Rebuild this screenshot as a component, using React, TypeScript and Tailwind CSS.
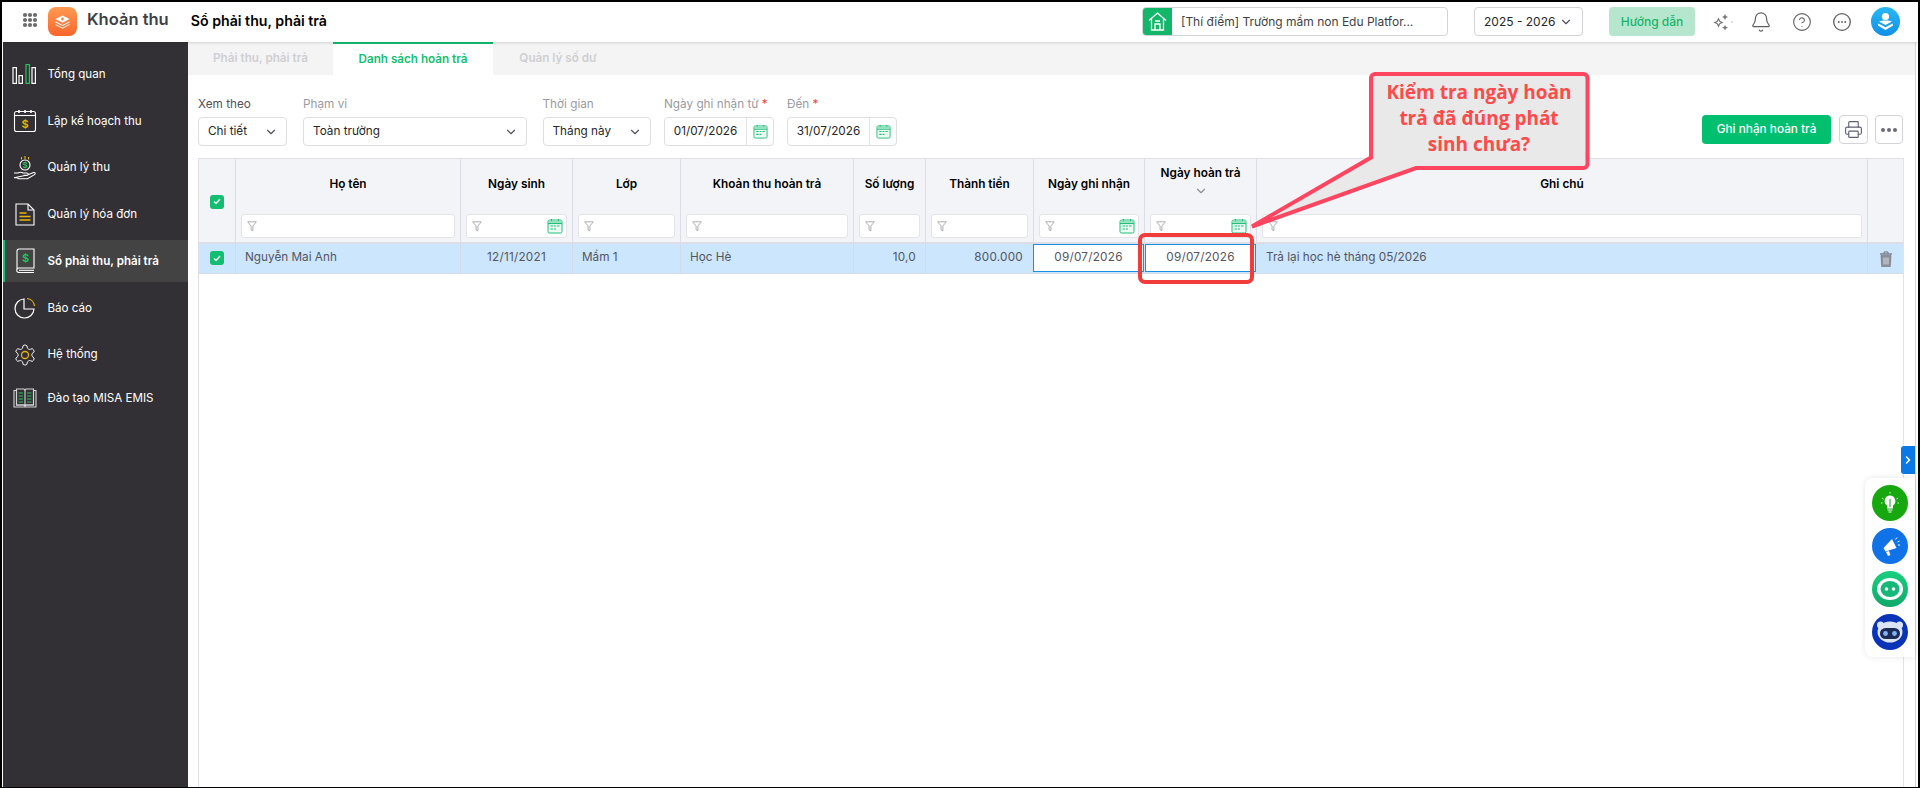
import React from "react";
import { Bell, ChevronDown, ChevronRight, CircleHelp, Printer } from "lucide-react";

const Y = "#eab308";
const G = "#22c55e";

function Grid3() {
  const c = [23, 28, 33];
  return (
    <svg width="60" height="40" viewBox="0 0 60 40" className="absolute left-0 top-0">
      {c.map((x) => [13, 18, 23].map((y) => <circle key={`${x}-${y}`} cx={x} cy={y} r="2.1" fill="#6b6b6b" />))}
    </svg>
  );
}

function Logo() {
  return (
    <svg width="29" height="29" viewBox="0 0 29 29" className="shrink-0">
      <defs>
        <linearGradient id="lg" x1="0" y1="0" x2="0" y2="1">
          <stop offset="0" stopColor="#ff9a52" />
          <stop offset="1" stopColor="#f9652b" />
        </linearGradient>
      </defs>
      <rect width="29" height="29" rx="8" fill="url(#lg)" />
      <path d="M14.5 8.5l7 3.6-7 3.6-7-3.6z" fill="#fff" />
      <path d="M8 14.6l6.5 3.3 6.5-3.3 1 .6-7.5 3.9-7.5-3.9z" fill="#fff" />
      <path d="M8 17.2l6.5 3.3 6.5-3.3 1 .6-7.5 3.9-7.5-3.9z" fill="#fff" opacity=".9" />
      <circle cx="14.5" cy="12" r="1.4" fill="#f9803f" />
    </svg>
  );
}

function IconOverview() {
  return (
    <svg width="25" height="22" viewBox="0 0 25 22" fill="none" strokeWidth="1.2">
      <rect x="1" y="4.6" width="3.4" height="15.8" stroke="#fff" />
      <rect x="7" y="12.6" width="3.4" height="7.8" stroke="#fff" />
      <rect x="14" y="1.6" width="3.4" height="18.8" stroke={G} />
      <rect x="20" y="4.6" width="3.4" height="15.8" stroke="#fff" />
    </svg>
  );
}
function IconPlan() {
  return (
    <svg width="24" height="24" viewBox="0 0 24 24" fill="none" stroke="#fff" strokeWidth="1.1">
      <rect x="1.5" y="2.5" width="21" height="20" rx="2" />
      <path d="M1.5 6.5h21" />
      <path d="M6 1v3M12 1v3M18 1v3" strokeWidth="1.6" />
      <text x="12" y="18.5" textAnchor="middle" fontSize="11" fontFamily="Inter" fontWeight="600" fill={Y} stroke="none">$</text>
    </svg>
  );
}
function IconCollect() {
  return (
    <svg width="24" height="26" viewBox="0 0 24 26" fill="none" stroke="#fff" strokeWidth="1.1">
      <path d="M12 1v3M8.5 2v2.4M15.5 2v2.4" stroke={Y} />
      <circle cx="12" cy="10" r="5" />
      <text x="12" y="13" textAnchor="middle" fontSize="8" fontFamily="Inter" fontWeight="600" fill={G} stroke="none">$</text>
      <path d="M1 18h4c2-1 3.5-1 5 0h4c1.6 0 1.6 2.4 0 2.4h-3.5M14.5 20l6-2.4c1.6-.5 2.4 1 1 2l-7 4.2H5.500l-1.500-1H1z" />
    </svg>
  );
}
function IconInvoice() {
  return (
    <svg width="22" height="24" viewBox="0 0 22 24" fill="none" stroke="#fff" strokeWidth="1.1">
      <path d="M2 2h12l6 6v15H2z" />
      <path d="M14 2v6h6" />
      <path d="M5.500 11h7M5.500 14.500h11M5.500 18h11" stroke={Y} strokeWidth="1.300" />
    </svg>
  );
}
function IconLedger() {
  return (
    <svg width="22" height="26" viewBox="0 0 22 26" fill="none" stroke="#fff" strokeWidth="1.1">
      <path d="M3 21V3a2 2 0 0 1 2-2h15v19H5a2 2 0 0 0 0 4.500h15" />
      <path d="M5 22.300h15" />
      <text x="11.500" y="14" textAnchor="middle" fontSize="11" fontFamily="Inter" fontWeight="600" fill={G} stroke="none">$</text>
    </svg>
  );
}
function IconPie() {
  return (
    <svg width="22" height="22" viewBox="0 0 22 22" fill="none" stroke="#fff" strokeWidth="1.2">
      <path d="M10 2a9.500 9.500 0 1 0 10 10H10z" />
      <path d="M13 1.500a8.500 8.500 0 0 1 7.500 7.500" stroke={Y} />
    </svg>
  );
}
function IconGear() {
  return (
    <svg width="24" height="24" viewBox="0 0 24 24" fill="none" stroke="#fff" strokeWidth="1">
      <path d="M12.220 2h-.44a2 2 0 0 0-2 2v.18a2 2 0 0 1-1 1.730l-.43.25a2 2 0 0 1-2 0l-.15-.08a2 2 0 0 0-2.730.73l-.22.38a2 2 0 0 0 .73 2.730l.15.1a2 2 0 0 1 1 1.720v.51a2 2 0 0 1-1 1.740l-.15.09a2 2 0 0 0-.73 2.730l.22.38a2 2 0 0 0 2.730.73l.15-.08a2 2 0 0 1 2 0l.43.25a2 2 0 0 1 1 1.730V20a2 2 0 0 0 2 2h.44a2 2 0 0 0 2-2v-.18a2 2 0 0 1 1-1.730l.43-.25a2 2 0 0 1 2 0l.15.08a2 2 0 0 0 2.730-.73l.22-.39a2 2 0 0 0-.73-2.730l-.15-.08a2 2 0 0 1-1-1.740v-.5a2 2 0 0 1 1-1.740l.15-.09a2 2 0 0 0 .73-2.730l-.22-.38a2 2 0 0 0-2.730-.73l-.15.08a2 2 0 0 1-2 0l-.43-.25a2 2 0 0 1-1-1.730V4a2 2 0 0 0-2-2z" />
      <circle cx="12" cy="12" r="3.500" stroke={Y} strokeWidth="1.300" />
    </svg>
  );
}
function IconBook() {
  return (
    <svg width="24" height="22" viewBox="0 0 24 22" fill="none" stroke="#d4d4d4" strokeWidth="1.1">
      <path d="M1 3.500h2.500v14.500H12v2H1zM23 3.500h-2.500v14.500H12v2h11z" />
      <path d="M3.500 2H11l1 1.500L13 2h7.500v16H13l-1 1-1-1H3.500zM12 3.500V19" />
      <path d="M5.500 6h4.500M5.500 9h4.500M5.500 12h4.500M5.500 15h4.500M14 6h4.500M14 9h4.500M14 12h4.500M14 15h4.500" stroke={G} />
    </svg>
  );
}

const MENU: [string, React.ReactNode, boolean?][] = [
  ["Tổng quan", <IconOverview />],
  ["Lập kế hoạch thu", <IconPlan />],
  ["Quản lý thu", <IconCollect />],
  ["Quản lý hóa đơn", <IconInvoice />],
  ["Sổ phải thu, phải trả", <IconLedger />, true],
  ["Báo cáo", <IconPie />],
  ["Hệ thống", <IconGear />],
  ["Đào tạo MISA EMIS", <IconBook />],
];

function Sidebar() {
  return (
    <aside className="w-[186px] shrink-0 border-l border-white bg-[#323034] pt-[11px] flex flex-col gap-[4.750px]">
      {MENU.map(([label, icon, active], i) => (
        <div
          key={label}
          className={`h-[42px] flex items-center border-l-[2px] ${active ? "border-[#12c26f] bg-[#434343] font-semibold" : "border-transparent"} ${i === 7 ? "-mt-[3px]" : ""}`}
        >
          <div className="w-[43px] pr-[4px] flex justify-center shrink-0">{icon}</div>
          <span className="-ml-[0.500px] mt-[1px] text-[11.600px] text-white whitespace-nowrap">{label}</span>
        </div>
      ))}
    </aside>
  );
}

function Sparkles() {
  return (
    <svg width="22" height="18" viewBox="0 0 22 18" fill="#7a7a7a">
      <path d="M6.500 4.500l1.800 3.500 3.400 1.500-3.400 1.500-1.800 3.500-1.800-3.500L1.300 9.500l3.400-1.500zM6.500 7.200l-.8 1.500-1.500.8 1.500.8.8 1.500.8-1.500 1.500-.8-1.500-.8z" fillRule="evenodd" />
      <path d="M13 1l1 2 2 1-2 1-1 2-1-2-2-1 2-1zM13 12l1 1.800 2 .9-2 .9-1 1.800-1-1.800-2-.9 2-.9z" />
      <circle cx="20" cy="9" r=".8" fill="#bbb" />
    </svg>
  );
}

function Ellipsis() {
  return (
    <svg width="20" height="20" viewBox="0 0 20 20" fill="none" className="ml-[20px]">
      <circle cx="10" cy="10" r="8.300" stroke="#5f5f5f" strokeWidth="1.300" />
      <circle cx="6.800" cy="10" r=".9" fill="#5f5f5f" />
      <circle cx="10" cy="10" r=".9" fill="#5f5f5f" />
      <circle cx="13.200" cy="10" r=".9" fill="#5f5f5f" />
    </svg>
  );
}

function Avatar() {
  return (
    <svg width="29" height="29" viewBox="0 0 29 29">
      <defs>
        <linearGradient id="av" x1="0" y1="0" x2="0" y2="1">
          <stop offset="0" stopColor="#2bb8f3" />
          <stop offset="1" stopColor="#0f8fe8" />
        </linearGradient>
      </defs>
      <circle cx="14.500" cy="14.500" r="14.500" fill="url(#av)" />
      <circle cx="14.500" cy="9.500" r="3.600" fill="#fff" />
      <path d="M8 14.500c2-1.500 11-1.500 13 0l-6.500 3.500z" fill="#fff" />
      <path d="M7.500 16.500l7 3.800 7-3.800.6 2-7.600 4.500-7.600-4.500z" fill="#fff" />
    </svg>
  );
}

function Header() {
  return (
    <header className="relative z-10 h-10 shrink-0 bg-white shadow-[0_1px_3px_rgba(0,0,0,0.14)] flex items-center rounded-tl-md">
      <Grid3 />
      <div className="ml-[46px] -mt-[1px]"><Logo /></div>
      <span className="ml-[10px] -mt-[5px] text-[16.500px] font-semibold text-[#3f3f46]">Khoản thu</span>
      <span className="ml-[22px] -mt-[2px] text-[14.200px] font-semibold text-black">Sổ phải thu, phải trả</span>
      <div className="ml-auto flex items-center -mt-[1px]">
        <div className="w-[306px] h-[29px] border border-[#d4d4d8] rounded-[4px] flex items-center overflow-hidden">
          <div className="w-[29px] h-full bg-[#12b76a] flex items-center justify-center shrink-0">
            <svg width="19" height="21" viewBox="0 0 19 21" fill="none" stroke="#fff" strokeWidth="1.300">
              <path d="M1 9.500L9.500 2 18 9.500M3.500 8v11h12V8M7 19v-6h5v6M7 10h5" />
            </svg>
          </div>
          <span className="ml-[9px] text-[12px] text-[#3f3f46] whitespace-nowrap">[Thí điểm] Trường mầm non Edu Platfor...</span>
        </div>
        <div className="ml-[26px] w-[109px] h-[29px] border border-[#d4d4d8] rounded-[4px] flex items-center justify-between pl-[9px] pr-[9px]">
          <span className="text-[12px] text-[#27272a]">2025 - 2026</span>
          <ChevronDown size={14} className="text-[#52525b]" />
        </div>
        <div className="ml-[26px] w-[86px] h-[29px] rounded-[4px] bg-[#b6e6cd] flex items-center justify-center text-[12px] font-medium text-[#16b56d]">Hướng dẫn</div>
        <div className="ml-[16px] w-[24px] flex justify-center"><Sparkles /></div>
        <Bell size={22} strokeWidth={1.300} className="ml-[15px] text-[#5f5f5f]" />
        <CircleHelp size={20} strokeWidth={1.300} className="ml-[20px] text-[#5f5f5f]" />
        <Ellipsis />
        <div className="ml-[19px] mr-[18px]"><Avatar /></div>
      </div>
    </header>
  );
}

function Cal({ size = 16 }: { size?: number }) {
  return (
    <svg width={size} height={size} viewBox="0 0 16 16" fill="none" stroke="#1fbf7a" strokeWidth="1" className="shrink-0">
      <rect x="1" y="2" width="14" height="13" rx="1.500" fill="#ecfbf4" />
      <path d="M1 5.500h14" strokeWidth="1.200" />
      <path d="M1.500 3.800h13" stroke="#8fe0bb" strokeWidth="2" />
      <path d="M4.500 1v2M11.500 1v2" />
      <path d="M3.500 8h2.500M7 8h2M10 8h2.500M3.500 11h2.500M7 11h2" strokeWidth="1.200" />
    </svg>
  );
}

function Funnel() {
  return (
    <svg width="10" height="11" viewBox="0 0 10 11" fill="none" stroke="#9a9aa2" strokeWidth="0.800" className="shrink-0">
      <path d="M.7.800h8.600L5.900 5v4.800L4.100 8.800V5z" />
    </svg>
  );
}

function TrashIcon() {
  return (
    <svg width="14" height="16" viewBox="0 0 14 16">
      <path d="M1 3h12" stroke="#71717a" strokeWidth="1.300" />
      <path d="M5 2.500V1h4v1.500" fill="none" stroke="#71717a" />
      <path d="M2 4.500h10l-.7 11H2.700z" fill="#8e8e96" stroke="#71717a" strokeWidth=".6" />
      <path d="M5 6.500v7M7 6.500v7M9 6.500v7" stroke="#dde6ee" strokeWidth=".9" />
    </svg>
  );
}

function Field({ label, w, req, dim, children }: { label: string; w: string; req?: boolean; dim?: boolean; children: React.ReactNode }) {
  return (
    <div className={`${w} shrink-0`}>
      <div className={`h-[20px] mb-[3px] text-[11.750px] leading-[20px] whitespace-nowrap ${dim ? "text-[#9b9ba1]" : "text-[#52525b]"}`}>
        {label}
        {req && <span className="text-[#ef4444]"> *</span>}
      </div>
      <div className="h-[29px] border border-[#dedee3] rounded-[4px] flex items-center bg-white">{children}</div>
    </div>
  );
}

function Sel({ text }: { text: string }) {
  return (
    <div className="flex-1 flex items-center justify-between pl-[9px] pr-[8px]">
      <span className="text-[11.750px] text-[#27272a]">{text}</span>
      <ChevronDown size={14} strokeWidth={2} className="text-[#52525b]" />
    </div>
  );
}

function DateIn({ text }: { text: string }) {
  return (
    <>
      <span className="flex-1 text-center text-[11.750px] text-[#27272a]">{text}</span>
      <div className="w-[27px] h-full border-l border-[#e4e4e7] flex items-center justify-center"><Cal size={15} /></div>
    </>
  );
}

function Check() {
  return (
    <div className="w-[14px] h-[14px] rounded-[3px] bg-[#12bf71] flex items-center justify-center">
      <svg width="8" height="7" viewBox="0 0 8 7" fill="none" stroke="#fff" strokeWidth="1.300"><path d="M1 3.500l2 2L7 1" /></svg>
    </div>
  );
}

const GRID = "grid grid-cols-[37px_225px_112px_108px_173px_72px_108px_111px_112px_611px_35px]";

const HEADS: [string, boolean?, boolean?][] = [
  ["Họ tên"],
  ["Ngày sinh", true],
  ["Lớp"],
  ["Khoản thu hoàn trả"],
  ["Số lượng"],
  ["Thành tiền"],
  ["Ngày ghi nhận", true],
  ["Ngày hoàn trả", true, true],
  ["Ghi chú"],
];

function HeadCell({ title, cal, sort }: { title: string; cal?: boolean; sort?: boolean }) {
  return (
    <div className="border-r border-[#dcdde6] flex flex-col">
      <div className={`h-[55px] flex flex-col items-center ${sort ? "pt-[6px]" : "justify-center pb-[4px]"}`}>
        <span className="text-[11.800px] font-semibold text-black whitespace-nowrap">{title}</span>
        {sort && <ChevronDown size={14} className="text-[#8d8d93] mt-[1px]" />}
      </div>
      <div className="mx-[5px] h-[24px] bg-white border border-[#e3e3e8] rounded-[3px] flex items-center justify-between pl-[5px] pr-[3px]">
        <Funnel />
        {cal && <Cal />}
      </div>
    </div>
  );
}

function DataTable() {
  return (
    <div className="w-[1706px] flex-1 border-x border-t border-[#dfdfe5] border-r-[#e3e3e3]">
      <div className={`${GRID} h-[85px] bg-[#f3f4f8] border-b-2 border-[#dcdde6]`}>
        <div className="border-r border-[#dcdde6] flex items-center justify-center pt-[2px]"><Check /></div>
        {HEADS.map(([t, c, s]) => <HeadCell key={t} title={t} cal={c} sort={s} />)}
        <div />
      </div>
      <div className={`${GRID} h-[30px] bg-[#cbe6fd] border-b border-[#d6dce6] text-[11.750px] text-[#55555e]`}>
        <div className="border-r border-[#d5dbe6] flex items-center justify-center pb-[1px]"><Check /></div>
        <div className="border-r border-[#d5dbe6] flex items-center pl-[9px] pb-[1px]">Nguyễn Mai Anh</div>
        <div className="border-r border-[#d5dbe6] flex items-center justify-center pb-[1px] tracking-[0.02em]">12/11/2021</div>
        <div className="border-r border-[#d5dbe6] flex items-center pl-[9px] pb-[1px]">Mầm 1</div>
        <div className="border-r border-[#d5dbe6] flex items-center pl-[9px] pb-[1px]">Học Hè</div>
        <div className="border-r border-[#d5dbe6] flex items-center justify-end pr-[9px] pb-[1px] tracking-[0.02em]">10,0</div>
        <div className="border-r border-[#d5dbe6] flex items-center justify-end pr-[10px] pb-[1px] tracking-[0.02em]">800.000</div>
        <div className="flex items-center justify-center bg-white border border-[#1a91e0] -ml-[1px] mr-[1px] mb-[1px] tracking-[0.02em]">09/07/2026</div>
        <div className="flex items-center justify-center bg-white border border-[#1a91e0] mr-[1px] mb-[1px] tracking-[0.02em]">09/07/2026</div>
        <div className="border-r border-[#d5dbe6] flex items-center pl-[9px] pb-[1px]">Trả lại học hè tháng 05/2026</div>
        <div className="flex items-center justify-center"><TrashIcon /></div>
      </div>
    </div>
  );
}

function Main() {
  return (
    <main className="flex-1 mr-[2px] border-r border-[#d4d4d4] flex flex-col min-w-0">
      <div className="h-[33px] shrink-0 bg-[#f4f4f5] flex items-stretch text-[11.700px] font-semibold [&>div]:pt-[1px]">
        <div className="w-[145px] flex items-center justify-center text-[#cfcfd2]">Phải thu, phải trả</div>
        <div className="w-[160px] flex items-center justify-center bg-white text-[#10bf72] border-t-2 border-[#10bf72]">Danh sách hoàn trả</div>
        <div className="w-[130px] flex items-center justify-center text-[#cfcfd2]">Quản lý số dư</div>
      </div>
      <div className="flex-1 pl-[10px] pr-[12px] pt-[19px] flex flex-col gap-[12px] min-h-0">
        <div className="flex items-start">
          <Field label="Xem theo" w="w-[89px]"><Sel text="Chi tiết" /></Field>
          <div className="w-[16px]" />
          <Field label="Phạm vi" w="w-[224px]" dim><Sel text="Toàn trường" /></Field>
          <div className="w-[15.500px]" />
          <Field label="Thời gian" w="w-[108.500px]" dim><Sel text="Tháng này" /></Field>
          <div className="w-[13px]" />
          <Field label="Ngày ghi nhận từ" w="w-[110px]" req dim><DateIn text="01/07/2026" /></Field>
          <div className="w-[13px]" />
          <Field label="Đến" w="w-[110px]" req dim><DateIn text="31/07/2026" /></Field>
          <div className="ml-auto mt-[21px] flex items-center">
            <div className="w-[129px] h-[29px] rounded-[4px] bg-[#00bf6f] flex items-center justify-center text-[11.800px] font-medium text-white">Ghi nhận hoàn trả</div>
            <div className="ml-[8px] w-[29px] h-[29px] rounded-[4px] border border-[#d4d4d8] flex items-center justify-center"><Printer size={19} strokeWidth={1.400} className="text-[#5f6072]" /></div>
            <div className="ml-[7px] w-[28px] h-[29px] rounded-[4px] border border-[#d4d4d8] flex items-center justify-center gap-[2px]">
              <i className="w-[4px] h-[4px] rounded-full bg-[#6b6b78]" />
              <i className="w-[4px] h-[4px] rounded-full bg-[#6b6b78]" />
              <i className="w-[4px] h-[4px] rounded-full bg-[#6b6b78]" />
            </div>
          </div>
        </div>
        <DataTable />
      </div>
    </main>
  );
}

function Callout() {
  return (
    <>
      <svg width="360" height="175" viewBox="1240 65 360 175" className="absolute left-[1240px] top-[65px] pointer-events-none">
        <path
          d="M1374 74H1583.500a4 4 0 0 1 4 4V164a4 4 0 0 1-4 4H1416L1252 226.500L1371 157.500V78a4 4 0 0 1 4-4Z"
          fill="#e9e9e9"
          stroke="#ff4560"
          strokeWidth="4"
        />
      </svg>
      <div className="absolute left-[1372px] top-[79px] w-[214px] text-center text-[#ff4a4a] text-[19px] leading-[26px] font-bold font-['Open_Sans',sans-serif]">
        Kiểm tra ngày hoàn<br />trả đã đúng phát<br />sinh chưa?
      </div>
      <div className="absolute left-[1138px] top-[233px] w-[116px] h-[51px] border-[4px] border-[#f23b3b] rounded-[7px]" />
    </>
  );
}

function Floating() {
  return (
    <>
      <div className="absolute left-[1901px] top-[446px] w-[14px] h-[28px] bg-[#0b78e6] rounded-l-[3px] flex items-center justify-center">
        <ChevronRight size={12} strokeWidth={3} className="text-white" />
      </div>
      <div className="absolute left-[1865px] top-[478px] w-[50px] h-[179px] bg-white rounded-l-[8px] shadow-[0_0_6px_rgba(0,0,0,0.10)] flex flex-col items-center pt-[7px] gap-[7px]">
        <svg width="36" height="36" viewBox="0 0 36 36">
          <circle cx="18" cy="18" r="18" fill="#17a80f" />
          <path d="M18 10.500a5.500 5.500 0 0 0-3 10v3h6v-3a5.500 5.500 0 0 0-3-10z" fill="#fff" />
          <path d="M15.500 25h5M16.500 27h3" stroke="#fff" strokeWidth="1.200" />
          <path d="M18 14v8" stroke="#17a80f" strokeWidth="1" />
          <path d="M10 13l1.500 1M26 13l-1.500 1M9 18h1.500M25.500 18H27M18 7v1.500" stroke="#c8f3c0" strokeWidth="1" />
        </svg>
        <svg width="36" height="36" viewBox="0 0 36 36">
          <circle cx="18" cy="18" r="18" fill="#0f72e6" />
          <path d="M20 11l4.500 9-11 3.500-2-3.500z" fill="#fff" />
          <path d="M14 24l2 4 2.500-1-1.500-4z" fill="#fff" />
          <path d="M23.500 11.500l1.500-2M25.500 14l2-1M26 17h2" stroke="#fff" strokeWidth="1" />
        </svg>
        <svg width="36" height="36" viewBox="0 0 36 36">
          <defs>
            <linearGradient id="bot" x1="0" y1="0" x2="0" y2="1">
              <stop offset="0" stopColor="#19d07e" />
              <stop offset="1" stopColor="#11a86a" />
            </linearGradient>
          </defs>
          <circle cx="18" cy="18" r="18" fill="url(#bot)" />
          <ellipse cx="18" cy="18" rx="13" ry="11" fill="#fff" />
          <ellipse cx="18" cy="18" rx="9.500" ry="8" fill="#16b878" />
          <circle cx="14.500" cy="18" r="1.800" fill="#fff" />
          <circle cx="21.500" cy="18" r="1.800" fill="#fff" />
        </svg>
        <svg width="36" height="36" viewBox="0 0 36 36">
          <circle cx="18" cy="18" r="18" fill="#0a33b8" />
          <circle cx="8.500" cy="11" r="3.500" fill="#dbe4f5" />
          <circle cx="27.500" cy="11" r="3.500" fill="#dbe4f5" />
          <ellipse cx="18" cy="18" rx="12.500" ry="10.500" fill="#dbe4f5" />
          <rect x="8" y="14" width="20" height="11" rx="5.500" fill="#1d2a55" />
          <circle cx="13.500" cy="19.500" r="2.400" fill="#7fb2ff" />
          <circle cx="22.500" cy="19.500" r="2.400" fill="#7fb2ff" />
        </svg>
      </div>
    </>
  );
}

export default function App() {
  return (
    <div className="relative w-[1920px] h-[788px] overflow-hidden font-['Inter',sans-serif] bg-black">
      <div className="h-full border-x-2 border-t-2 border-b border-black bg-white flex flex-col">
        <Header />
        <div className="flex-1 flex min-h-0">
          <Sidebar />
          <Main />
        </div>
      </div>
      <Callout />
      <Floating />
    </div>
  );
}
